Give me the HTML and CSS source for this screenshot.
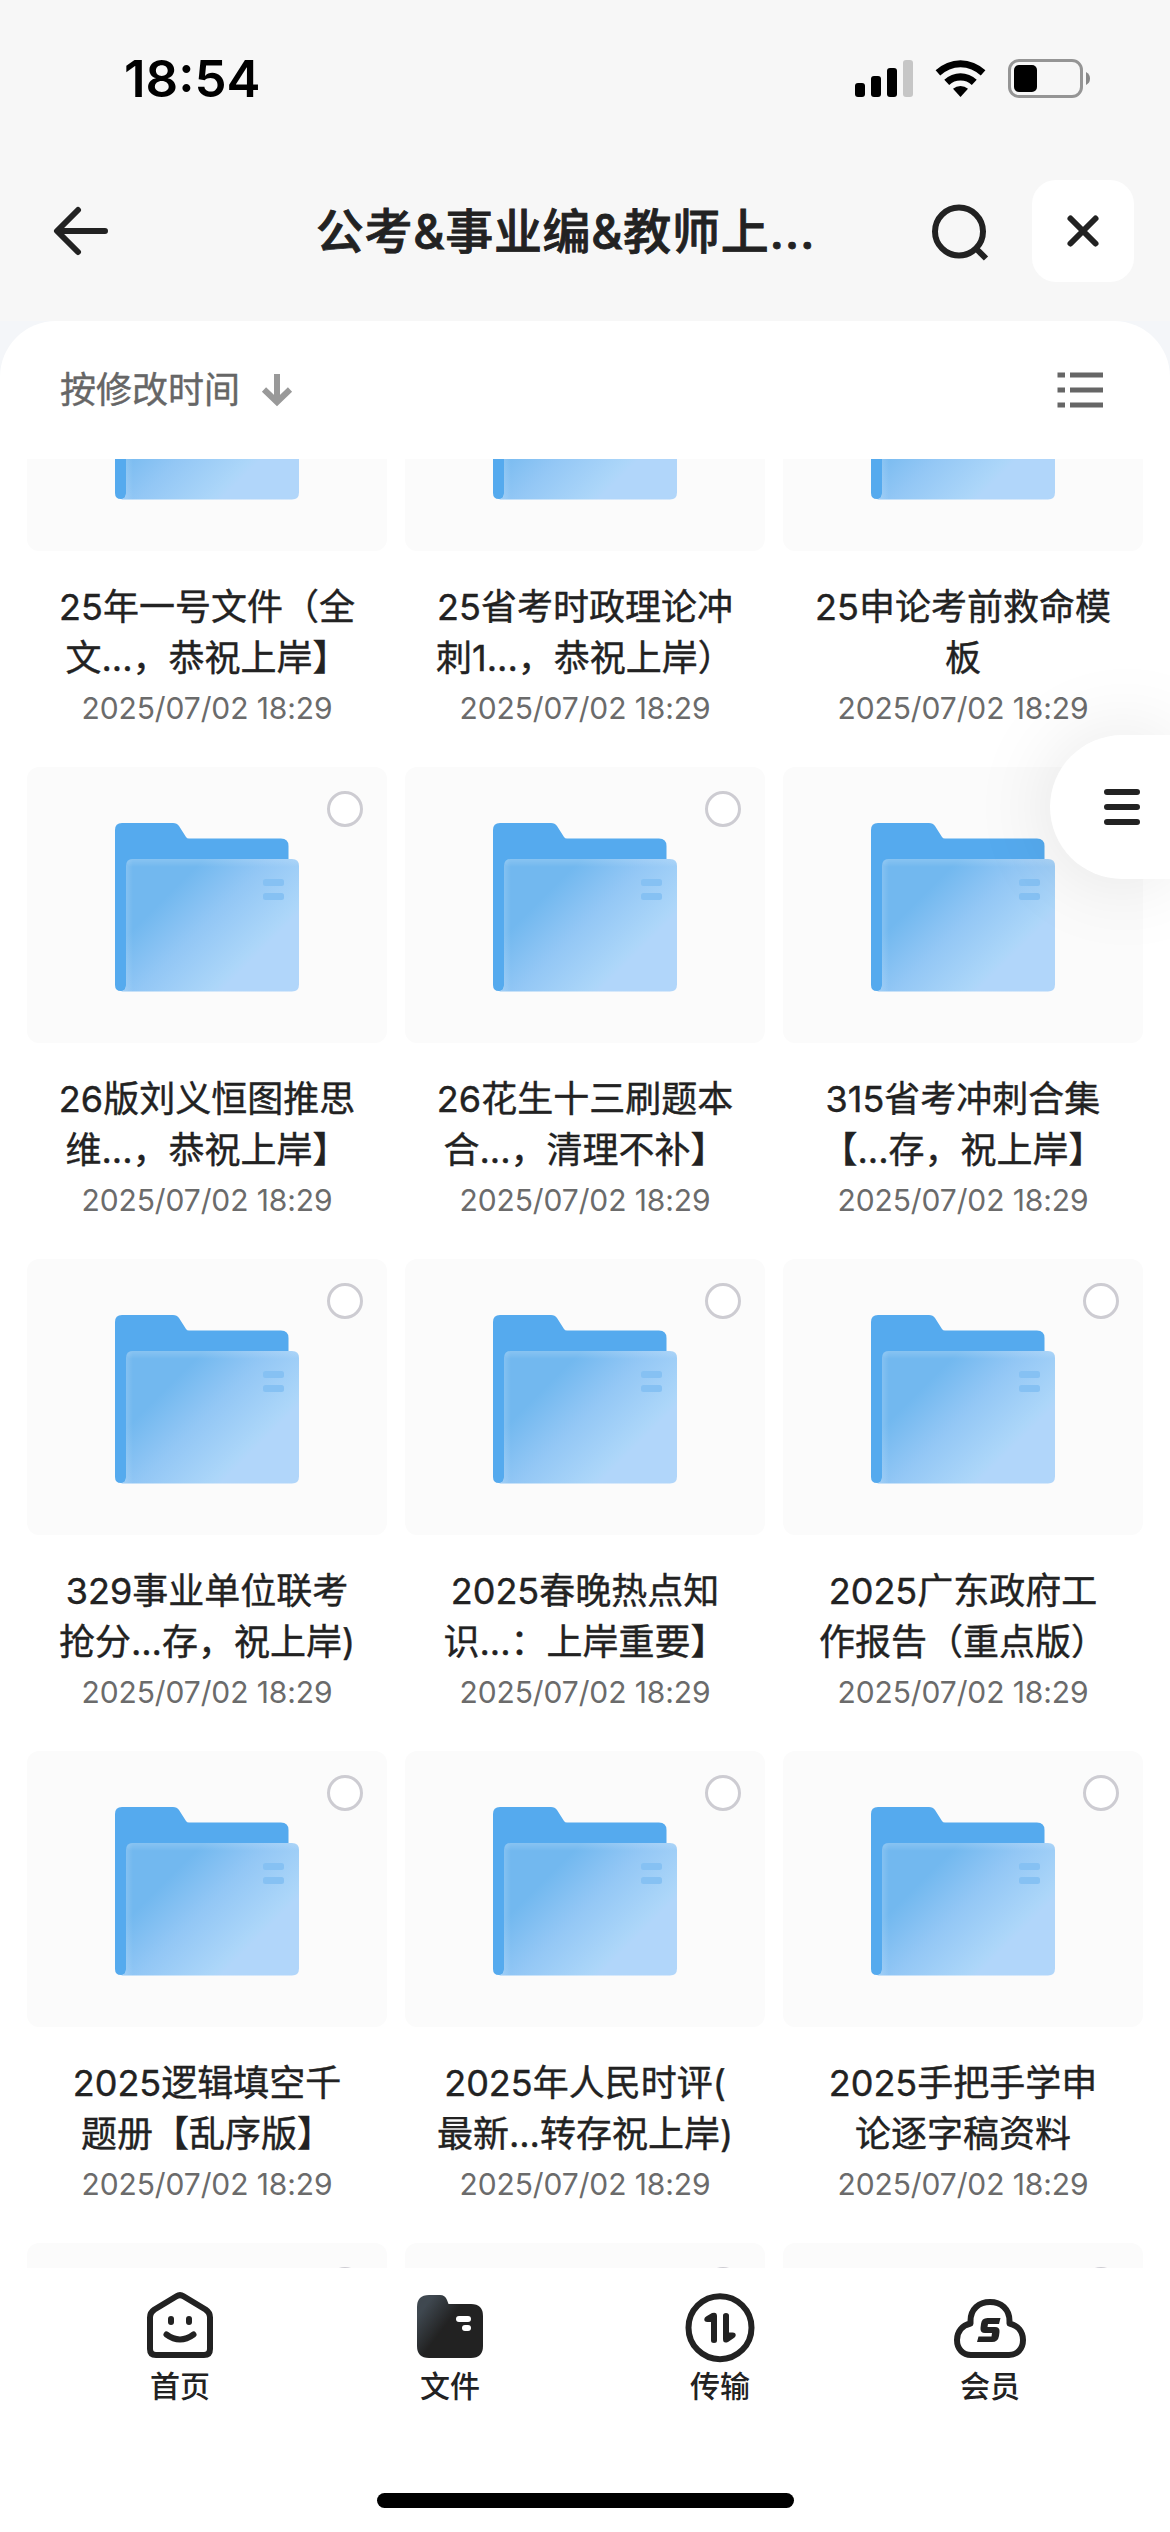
FILE: index.html
```
<!DOCTYPE html>
<html lang="zh-CN">
<head>
	<meta charset="utf-8">
	<title>文件</title>
	<link rel="stylesheet" href="styles.css">
	<script src="files.js" defer></script>
</head>
<body>
	<div class="status">
		<span class="time">18:54</span>
		<svg class="signal" width="58" height="37" viewBox="0 0 58 37">
			<rect x="0" y="23" width="10" height="14" rx="3"/>
			<rect x="16" y="16" width="10" height="21" rx="3"/>
			<rect x="32" y="8" width="10" height="29" rx="3"/>
			<rect x="48" y="0" width="10" height="37" rx="3" fill="#c6c6c6"/>
		</svg>
		<svg class="wifi" width="51" height="37" viewBox="0 0 51 37">
			<path d="M0.6 10.3A36 36 0 0 1 50.4 10.3L45.8 15.6A29 29 0 0 0 5.2 15.6Z"/>
			<path d="M9.3 19.8A23.5 23.5 0 0 1 41.7 19.8L36.8 24.9A16.5 16.5 0 0 0 14.2 24.9Z"/>
			<path d="M18 28.8A11.5 11.5 0 0 1 33 28.8L25.5 37Z"/>
		</svg>
		<svg class="battery" width="83" height="39" viewBox="0 0 83 39">
			<rect x="1.5" y="1.5" width="72" height="36" rx="9.5" fill="none" stroke="#959595" stroke-width="3"/>
			<rect x="6" y="6" width="23" height="27" rx="5"/>
			<path d="M78 13Q82 15 82 19.500T78 26Z" fill="#888"/>
		</svg>
	</div>

	<header class="header">
		<svg class="back" width="54" height="48" viewBox="0 0 54 48">
			<path d="M24 3L3 24L24 45M3.500 24H51"/>
		</svg>
		<h1>公考&amp;事业编&amp;教师上...</h1>
		<svg class="search" width="57" height="57" viewBox="0 0 57 57">
			<circle cx="27" cy="28.500" r="24"/>
			<path d="M44 45.500L54 55.500"/>
		</svg>
		<button class="close">
			<svg width="30" height="30" viewBox="0 0 30 30"><path d="M2.500 2.500L27.500 27.500M27.500 2.500L2.500 27.500"/></svg>
		</button>
	</header>

	<div class="back-layer">
	<main class="sheet">
		<div class="sort">
			<span>按修改时间</span>
			<svg class="down" width="30" height="32" viewBox="0 0 30 32"><path d="M15 0V27M2 15.500L15 28L28 15.500"/></svg>
			<svg class="list" width="47" height="36" viewBox="0 0 47 36">
				<path d="M0.500 3H8M13 3H46M0.500 18H8M13 18H46M0.500 33H8M13 33H46"/>
			</svg>
		</div>
		<div class="viewport">
			<div class="grid" id="grid"></div>
		</div>
	</main>
	</div>

	<nav class="tabs">
		<a class="tab">
			<svg width="72" height="72" viewBox="0 0 72 72">
				<path class="line" d="M32.500 7.200Q36 5 39.500 7.200L61.500 20.500Q66 23.500 66 28.500V60Q66 66 60 66H12Q6 66 6 60V28.500Q6 23.500 10.500 20.500Z"/>
				<rect x="24" y="27" width="6" height="9" rx="3"/>
				<rect x="42" y="27" width="6" height="9" rx="3"/>
				<path class="line" d="M22.500 45.500Q36 55.500 49.500 45.500"/>
			</svg>
			<span>首页</span>
		</a>
		<a class="tab">
			<svg width="72" height="72" viewBox="0 0 72 72">
				<defs>
					<linearGradient id="dark" x1="0" y1="0.200" x2="0.700" y2="0.700">
						<stop offset="0.100" stop-color="#3f4850"/>
						<stop offset="0.600" stop-color="#222"/>
					</linearGradient>
				</defs>
				<path fill="url(#dark)" d="M3 18Q3 6 15 6H26Q31 6 33 11L34.500 15H57Q69 15 69 27V57Q69 69 57 69H15Q3 69 3 57Z"/>
				<rect x="42" y="27" width="15" height="6" rx="3" fill="#fff"/>
				<rect x="48" y="36" width="9" height="6" rx="3" fill="#fff"/>
			</svg>
			<span>文件</span>
		</a>
		<a class="tab">
			<svg width="72" height="72" viewBox="0 0 72 72">
				<circle class="line" cx="36" cy="38.700" r="31.500"/>
				<path d="M27 33H23.500Q20 33 20.300 30Q20.500 28.500 22.500 27.300L28 24Q33 22.500 33 27V51.500Q33 54 30 54T27 51.500Z"/>
				<path d="M45 43.500H48.500Q52 43.500 51.700 46.500Q51.500 48 49.500 49.200L44 53Q39 55 39 50V26.500Q39 24 42 24T45 26.500Z"/>
			</svg>
			<span>传输</span>
		</a>
		<a class="tab">
			<svg width="72" height="72" viewBox="0 0 72 72">
				<path class="line" d="M17 66H55C63 66 69 60 69 51C69 43 64 36.500 55.500 34.500V32C55.500 20 47 13 36 13S16.500 20 16.500 32V34.500C8 36.500 3 43 3 51C3 60 9 66 17 66Z"/>
				<path d="M33.500 29H46.500L45 35H34L33.500 38H41Q46 38 45.500 43L45 47Q44 53 38 53H23L24.500 47.500H37.500L38 44H31Q26 44 26.500 39L27 35Q27.500 29 33.500 29Z"/>
			</svg>
			<span>会员</span>
		</a>
	</nav>
	<div class="home-bar"></div>

	<button class="drawer">
		<svg width="36" height="36" viewBox="0 0 36 36"><path d="M3 3H33M3 18H33M3 33H33"/></svg>
	</button>

	<!-- shared folder drawing, reused by every card -->
	<svg class="defs" width="0" height="0">
		<defs>
			<linearGradient id="front" gradientUnits="userSpaceOnUse" x1="62" y1="62" x2="137" y2="137">
				<stop offset="0" stop-color="#72b8ef"/>
				<stop offset="0.450" stop-color="#93c7f5"/>
				<stop offset="0.930" stop-color="#acd6f9"/>
				<stop offset="1" stop-color="#b1d6fa"/>
			</linearGradient>
			<linearGradient id="edgeX"><stop offset="0.300" stop-color="#fff" stop-opacity="0.160"/><stop offset="1" stop-color="#fff" stop-opacity="0"/></linearGradient>
			<linearGradient id="edgeY" x2="0" y2="1"><stop offset="0" stop-color="#fff" stop-opacity="0.160"/><stop offset="1" stop-color="#fff" stop-opacity="0"/></linearGradient>
			<symbol id="folder" viewBox="0 0 184 169">
				<path fill="#55aaee" d="M0 7Q0 0 7 0H58Q62 0 64 3L71 14Q72 15.500 74 15.500H166Q173.500 15.500 173.500 23V160H11V163Q11 168 6 168Q0 168 0 162Z"/>
				<path fill="url(#front)" d="M11 43Q11 36 18 36H177Q184 36 184 43V161.500Q184 168.500 177 168.500H6Q11 167.500 11 162Z"/>
				<path fill="url(#edgeX)" d="M11 43Q11 36 18 36V168.500H6Q11 167.500 11 162Z"/>
				<rect fill="url(#edgeY)" x="12" y="36" width="171" height="8" rx="5"/>
				<g fill="#86c1f3"><rect x="148" y="56" width="21" height="7" rx="2.500"/><rect x="148" y="70" width="21" height="7" rx="2.500"/></g>
			</symbol>
		</defs>
	</svg>
</body>
</html>
```
FILE: styles.css
```
* {
	box-sizing: border-box;
}

body {
	margin: 0;
	width: 1170px;
	height: 2532px;
	overflow: hidden;
	display: flex;
	flex-direction: column;
	position: relative;
	background: #fff;
	color: #222;
	font-family: Inter, "Noto Sans CJK SC", sans-serif;
}

button {
	border: 0;
	padding: 0;
	background: #fff;
}

svg {
	display: block;
	flex: none;
	overflow: visible;
}

.status {
	height: 156px;
	padding: 0 79px 0 124px;
	display: flex;
	align-items: center;
	background: #f7f7f7;
	color: #000;
}

.time {
	flex: 1;
	font-size: 51px;
	font-weight: 570;
}

.signal {
	margin-right: 22px;
}

.wifi {
	margin-right: 22px;
}

.header {
	height: 165px;
	padding: 0 36px 15px 54px;
	display: flex;
	align-items: center;
	background: #f7f7f7;
}

.header path, .header circle, .drawer path {
	fill: none;
	stroke: #222;
	stroke-width: 6;
	stroke-linecap: round;
	stroke-linejoin: round;
}

.header h1 {
	flex: 1;
	margin: 0;
	padding: 2px 0 0 91px;
	text-align: center;
	font-size: 48px;
	font-weight: 500;
	letter-spacing: 0.7px;
	line-height: 60px;
	white-space: nowrap;
	-webkit-text-stroke: 0.8px #222;
}

.header .search path {
	stroke-linecap: butt;
}

.close {
	width: 102px;
	height: 102px;
	margin-left: 43px;
	border-radius: 24px;
	display: flex;
	align-items: center;
	justify-content: center;
}

.back-layer {
	background: #f4f6f9;
}

.sheet {
	height: 1947px;
	background: #fff;
	border-radius: 56px 56px 0 0;
}

.sort {
	height: 138px;
	padding: 0 66px 0 60px;
	display: flex;
	align-items: center;
	color: #666;
	font-size: 36px;
	-webkit-text-stroke: 0.4px #666;
}

.sort span {
	padding-bottom: 6px;
}

.down {
	margin-left: 22px;
}

.down path {
	fill: none;
	stroke: #999;
	stroke-width: 6;
}

.list {
	margin-left: auto;
}

.list path {
	stroke: #666;
	stroke-width: 5;
}

.viewport {
	height: 1809px;
	overflow: hidden;
	display: flex;
	flex-direction: column;
}

/* the list is scrolled part way into its first row */
.grid {
	margin: -184px 27px 0;
	display: grid;
	grid-template-columns: repeat(3, 360px);
	grid-auto-rows: 492px;
	column-gap: 18px;
}

.item {
	text-align: center;
}

.thumb {
	height: 276px;
	position: relative;
	display: flex;
	justify-content: center;
	padding-top: 56px;
	border-radius: 12px;
	background: #fbfbfb;
}

.check {
	position: absolute;
	top: 24px;
	right: 24px;
	width: 36px;
	height: 36px;
	border: 3px solid #cdccd2;
	border-radius: 50%;
	background: #fff;
}

.name {
	margin-top: 31px;
	font-size: 36px;
	line-height: 51px;
	white-space: nowrap;
	-webkit-text-stroke: 0.4px #222;
}

.date {
	color: #6b6b6b;
	font-size: 30px;
	letter-spacing: -0.1px;
	line-height: 49px;
}

.tabs {
	height: 225px;
	padding: 18px 45px 0;
	display: grid;
	grid-template-columns: repeat(4, 270px);
}

.tab {
	display: flex;
	flex-direction: column;
	align-items: center;
	font-size: 30px;
	font-weight: 500;
	line-height: 40px;
}

.tab svg {
	margin: 3px 0 5px;
	fill: #222;
}

.tab .line {
	fill: none;
	stroke: #222;
	stroke-width: 6;
	stroke-linecap: round;
	stroke-linejoin: round;
}

.home-bar {
	width: 417px;
	height: 15px;
	margin: 0 auto;
	border-radius: 8px;
	background: #000;
}

/* floats over the grid, stuck to the right edge */
.drawer {
	position: absolute;
	top: 735px;
	right: 0;
	width: 120px;
	height: 144px;
	padding-left: 54px;
	border-radius: 72px 0 0 72px;
	box-shadow: 0 0 84px rgba(0, 0, 0, 0.1);
}

.defs {
	position: absolute;
}
```
FILE: files.js
```
var names = [
	["25年一号文件（全", "文...，恭祝上岸】"],
	["25省考时政理论冲", "刺1...，恭祝上岸）"],
	["25申论考前救命模", "板"],
	["26版刘义恒图推思", "维...，恭祝上岸】"],
	["26花生十三刷题本", "合...，清理不补】"],
	["315省考冲刺合集", "【...存，祝上岸】"],
	["329事业单位联考", "抢分...存，祝上岸)"],
	["2025春晚热点知", "识...：上岸重要】"],
	["2025广东政府工", "作报告（重点版）"],
	["2025逻辑填空千", "题册【乱序版】"],
	["2025年人民时评(", "最新...转存祝上岸)"],
	["2025手把手学申", "论逐字稿资料"]
];

var html = "";

names.forEach(function(name) {
	html += '<div class="item">'
		+ '<div class="thumb"><svg width="184" height="169"><use href="#folder"></use></svg><i class="check"></i></div>'
		+ '<div class="name">' + name.join("<br>") + '</div>'
		+ '<div class="date">2025/07/02 18:29</div>'
		+ '</div>';
});

// top edge of the next row
for (var i = 0; i < 3; i++) {
	html += '<div class="item"><div class="thumb"><i class="check"></i></div></div>';
}

document.getElementById("grid").innerHTML = html;
```
